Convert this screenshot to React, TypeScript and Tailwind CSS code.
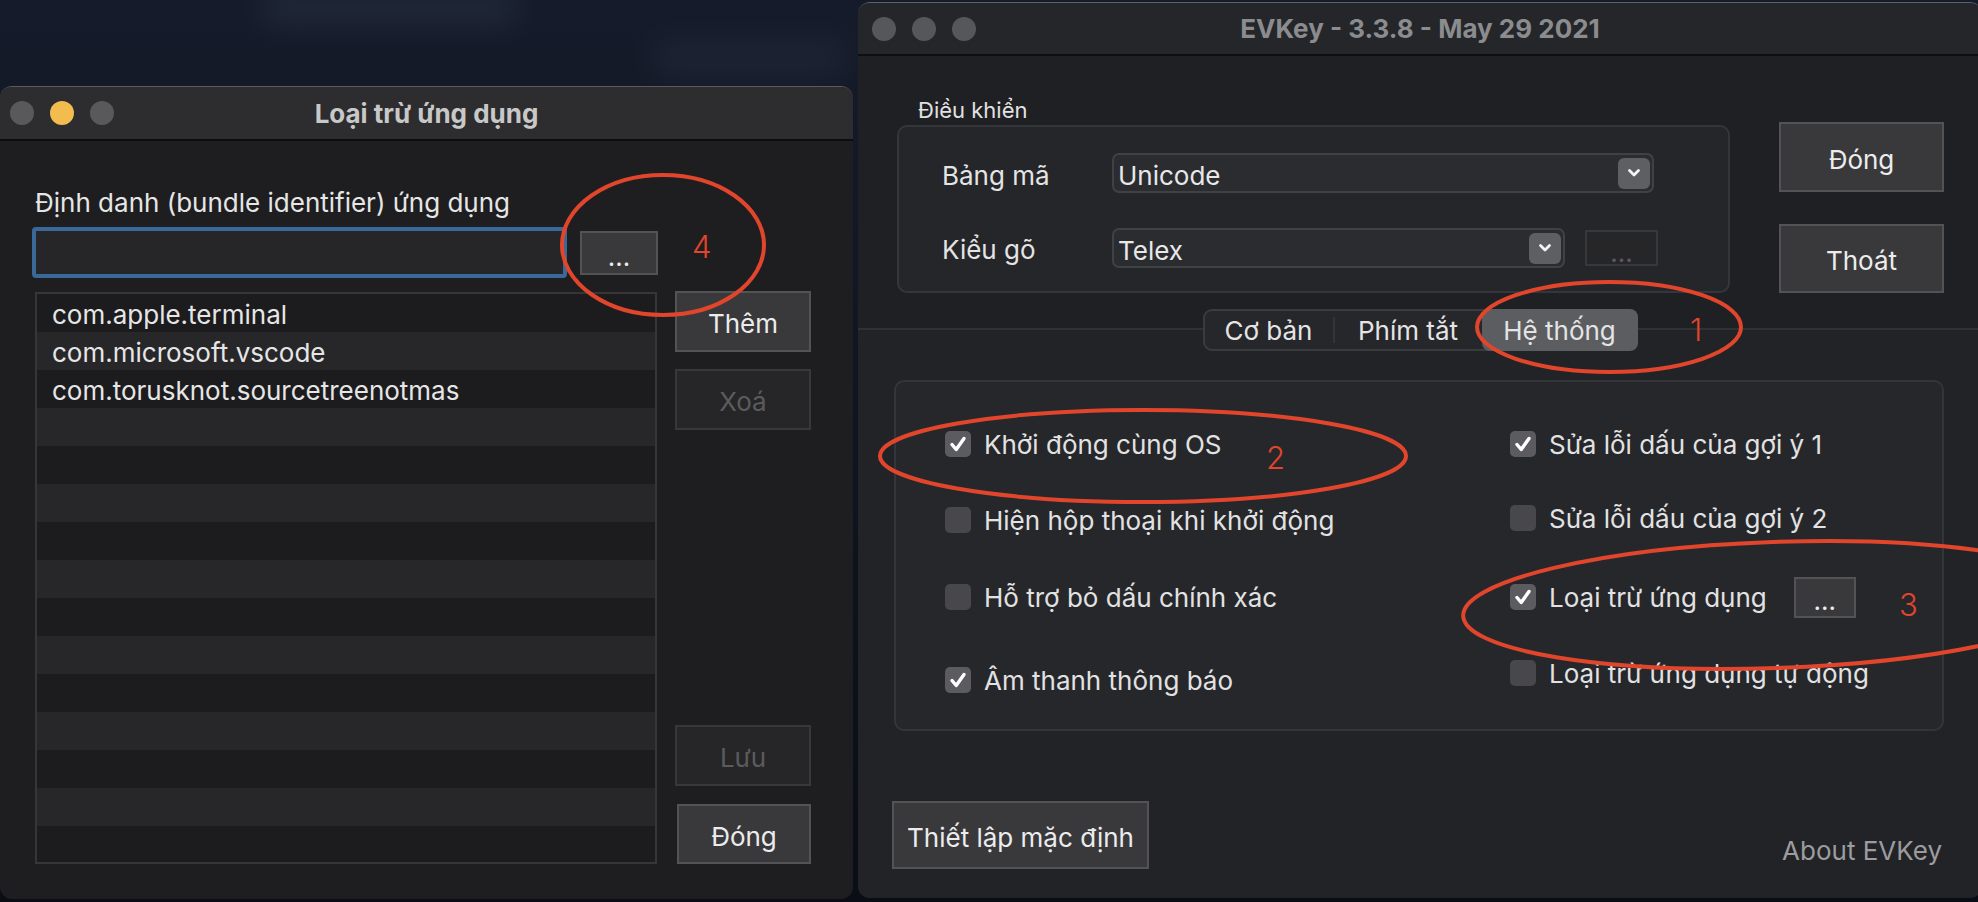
import React from "react";

const rows = ["com.apple.terminal", "com.microsoft.vscode", "com.torusknot.sourcetreenotmas"];

function Lights({ yellow, gray }: { yellow?: boolean; gray: string }) {
  return (
    <div className="flex items-center gap-[16px]">
      <span className={`block w-[24px] h-[24px] rounded-full ${gray}`} />
      <span className={`block w-[24px] h-[24px] rounded-full ${yellow ? "bg-[#f3bc4e]" : gray}`} />
      <span className={`block w-[24px] h-[24px] rounded-full ${gray}`} />
    </div>
  );
}

function Btn({ children, className = "", disabled }: any) {
  return (
    <button
      className={`flex items-center justify-center border-2 text-[26px] leading-none ${
        disabled
          ? "bg-[#262628] border-[#38383a] text-[#5b5b5d]"
          : "bg-[#39393c] border-[#535356] text-[#ececec]"
      } ${className}`}
    >
      {children}
    </button>
  );
}

function Check({ on, label, children }: any) {
  return (
    <div className="flex items-center h-[40px]">
      <span
        className={`flex items-center justify-center w-[26px] h-[26px] rounded-[5px] ${
          on ? "bg-[#5c5c60]" : "bg-[#48484c]"
        }`}
      >
        {on && (
          <svg width="22" height="22" viewBox="0 0 22 22">
            <path d="M5 11.5l4.2 5L17 5.5" fill="none" stroke="#fff" strokeWidth="3.4" strokeLinecap="round" strokeLinejoin="round" />
          </svg>
        )}
      </span>
      <span className="ml-[13px] text-[26px] leading-[31px] text-[#e2e2e2]">{label}</span>
      {children}
    </div>
  );
}

function Popup({ text, width }: { text: string; width: string }) {
  return (
    <div className={`${width} h-[40px] flex items-center justify-between rounded-[7px] border-2 border-[#404145] bg-[#2b2c30] pl-[4px] pr-[2px]`}>
      <span className="pt-[5px] text-[26px] leading-none text-[#e8e8e8]">{text}</span>
      <span className="flex items-center justify-center w-[32px] h-[31px] rounded-[6px] bg-[#5e5f63]">
        <svg width="16" height="12" viewBox="0 0 16 12">
          <path d="M3.5 3.5l4.5 4.5 4.5-4.5" fill="none" stroke="#f4f4f4" strokeWidth="2.8" strokeLinecap="round" strokeLinejoin="round" />
        </svg>
      </span>
    </div>
  );
}

export default function App() {
  return (
    <div className="relative w-[1978px] h-[902px] overflow-hidden bg-gradient-to-b from-[#151b2a] via-[#0f1420] to-[#0a0d15] font-['Inter','Noto_Sans',sans-serif]">
      {/* wallpaper clouds */}
      <div className="absolute left-[260px] top-[-10px] w-[260px] h-[36px] rounded-full bg-[#3a4456] opacity-30 blur-[14px]" />
      <div className="absolute left-[650px] top-[40px] w-[200px] h-[36px] rounded-full bg-[#2c3444] opacity-40 blur-[16px]" />

      {/* left window */}
      <div className="absolute left-0 top-[86px] w-[853px] h-[813px] rounded-[12px] overflow-hidden flex flex-col bg-[#1e1e20] border-t border-[#5b5b5d]">
        <div className="h-[54px] grid grid-cols-[1fr_auto_1fr] items-center bg-[#2d2d2f] border-b-2 border-[#0d0d0e] pl-[10px]">
          <Lights yellow gray="bg-[#59595b]" />
          <div className="text-[26px] font-bold text-[#c8c8c8] -ml-[10px]">Loại trừ ứng dụng</div>
          <div />
        </div>
        <div className="flex-1 flex flex-col pl-[32px] pt-[44px]">
          <div className="pl-[3px] pt-[2px] text-[26px] leading-[31px] text-[#e6e6e6]">Định danh (bundle identifier) ứng dụng</div>
          <div className="mt-[9px] flex items-center">
            <div className="w-[535px] h-[51px] rounded-[4px] border-[4px] border-[#3a6898] bg-[#262628]" />
            <Btn className="ml-[13px] w-[78px] h-[44px] pt-[8px]">...</Btn>
          </div>
          <div className="mt-[14px] flex">
            <div className="ml-[3px] w-[622px] h-[572px] border-2 border-[#363638] overflow-hidden flex flex-col">
              {Array.from({ length: 16 }).map((_, i) => (
                <div
                  key={i}
                  className={`shrink-0 h-[38px] flex items-center pl-[15px] pt-[4px] text-[26px] leading-none text-[#e6e6e6] ${
                    i % 2 === 0 ? "bg-[#1c1c1e]" : "bg-[#27272a]"
                  }`}
                >
                  {rows[i] ?? ""}
                </div>
              ))}
            </div>
            <div className="ml-[18px] w-[136px] flex flex-col">
              <Btn className="-mt-[1px] h-[61px] pt-[5px]">Thêm</Btn>
              <Btn disabled className="mt-[17px] h-[61px] pt-[5px]">Xoá</Btn>
              <div className="flex-1" />
              <Btn disabled className="h-[61px] pt-[5px]">Lưu</Btn>
              <Btn className="mt-[18px] ml-[2px] h-[60px] pt-[5px]">Đóng</Btn>
            </div>
          </div>
        </div>
      </div>

      {/* right window */}
      <div className="absolute left-[858px] top-[2px] w-[1124px] h-[896px] rounded-[12px] overflow-hidden flex flex-col bg-[#1f2023] border-t border-[#606164]">
        <div className="h-[53px] grid grid-cols-[1fr_auto_1fr] items-center bg-[#25262a] border-b-2 border-[#0e0f10] pl-[14px]">
          <Lights gray="bg-[#55575a]" />
          <div className="text-[26px] font-bold text-[#8b8c8f] -ml-[14px]">EVKey - 3.3.8 - May 29 2021</div>
          <div />
        </div>
        <div className="flex-1 flex flex-col">
          <div className="flex pl-[39px] pt-[40px]">
            <div className="w-[833px] flex flex-col">
              <div className="pl-[21px] pt-[1px] text-[22px] leading-[26px] text-[#e2e2e2]">Điều khiển</div>
              <div className="mt-[2px] h-[168px] rounded-[10px] border-2 border-[#35363a] bg-[#25262a] pl-[43px] pt-[26px] flex flex-col">
                <div className="flex items-center h-[40px]">
                  <span className="w-[170px] pt-[5px] text-[26px] leading-none text-[#e4e4e4]">Bảng mã</span>
                  <Popup text="Unicode" width="w-[542px]" />
                </div>
                <div className="mt-[35px] flex items-center h-[40px]">
                  <span className="w-[170px] pt-[3px] text-[26px] leading-none text-[#e4e4e4]">Kiểu gõ</span>
                  <Popup text="Telex" width="w-[453px]" />
                  <Btn disabled className="ml-[20px] w-[73px] h-[36px] pt-[10px] text-[20px]">...</Btn>
                </div>
              </div>
            </div>
            <div className="ml-[49px] pt-[26px] flex flex-col">
              <Btn className="w-[165px] h-[70px] pt-[5px]">Đóng</Btn>
              <Btn className="mt-[32px] w-[165px] h-[69px] pt-[5px]">Thoát</Btn>
            </div>
          </div>

          <div className="mt-[35px] flex-1 border-t-2 border-[#303135] bg-[#222327] flex flex-col">
            <div className="-mt-[21px] flex justify-center">
              <div className="flex h-[42px] rounded-[9px] border-2 border-[#3a3b3f] bg-[#26272b] text-[26px] leading-none text-[#e4e4e4]">
                <div className="w-[130px] flex items-center justify-center border-r-2 border-[#34353a] my-[6px] pt-[2px]">Cơ bản</div>
                <div className="w-[147px] flex items-center justify-center pt-[2px]">Phím tắt</div>
                <div className="w-[156px] flex items-center justify-center rounded-[8px] bg-[#5c5d61] -my-[2px] -mr-[2px] pt-[2px]">Hệ thống</div>
              </div>
            </div>

            <div className="ml-[36px] mt-[29px] w-[1050px] h-[351px] rounded-[10px] border-2 border-[#34353a] bg-[#26272b] flex pl-[49px]">
              <div className="w-[565px] flex flex-col pt-[42px]">
                <Check on label="Khởi động cùng OS" />
                <div className="mt-[36px]"><Check label="Hiện hộp thoại khi khởi động" /></div>
                <div className="mt-[37px]"><Check label="Hỗ trợ bỏ dấu chính xác" /></div>
                <div className="mt-[43px]"><Check on label="Âm thanh thông báo" /></div>
              </div>
              <div className="flex flex-col pt-[42px]">
                <Check on label="Sửa lỗi dấu của gợi ý 1" />
                <div className="mt-[34px]"><Check label="Sửa lỗi dấu của gợi ý 2" /></div>
                <div className="mt-[39px]">
                  <Check on label="Loại trừ ứng dụng">
                    <Btn className="ml-[27px] w-[62px] h-[41px] pt-[8px]">...</Btn>
                  </Check>
                </div>
                <div className="mt-[36px]"><Check label="Loại trừ ứng dụng tự động" /></div>
              </div>
            </div>

            <div className="ml-[34px] mt-[70px] w-[1050px] flex items-end justify-between">
              <Btn className="w-[257px] h-[68px] pt-[5px]">Thiết lập mặc định</Btn>
              <span className="mb-[3px] text-[26px] leading-[31px] text-[#9c9c9e]">About EVKey</span>
            </div>
          </div>
        </div>
      </div>

      {/* annotations */}
      <svg className="absolute left-0 top-0 pointer-events-none" width="1978" height="902">
        <g fill="none" stroke="#e1452c" strokeWidth="4">
          <ellipse cx="663" cy="245" rx="101" ry="70" />
          <ellipse cx="1609" cy="327" rx="132" ry="45" />
          <ellipse cx="1143" cy="456" rx="263" ry="46" />
          <ellipse cx="1775" cy="605" rx="312" ry="63" transform="rotate(-2 1775 605)" />
        </g>
      </svg>
      <span className="absolute left-[692px] top-[229px] text-[31px] font-light leading-[36px] text-[#e1452c]">4</span>
      <span className="absolute left-[1690px] top-[312px] text-[31px] font-light leading-[36px] text-[#e1452c]">1</span>
      <span className="absolute left-[1266px] top-[440px] text-[31px] font-light leading-[36px] text-[#e1452c]">2</span>
      <span className="absolute left-[1899px] top-[587px] text-[31px] font-light leading-[36px] text-[#e1452c]">3</span>
    </div>
  );
}
